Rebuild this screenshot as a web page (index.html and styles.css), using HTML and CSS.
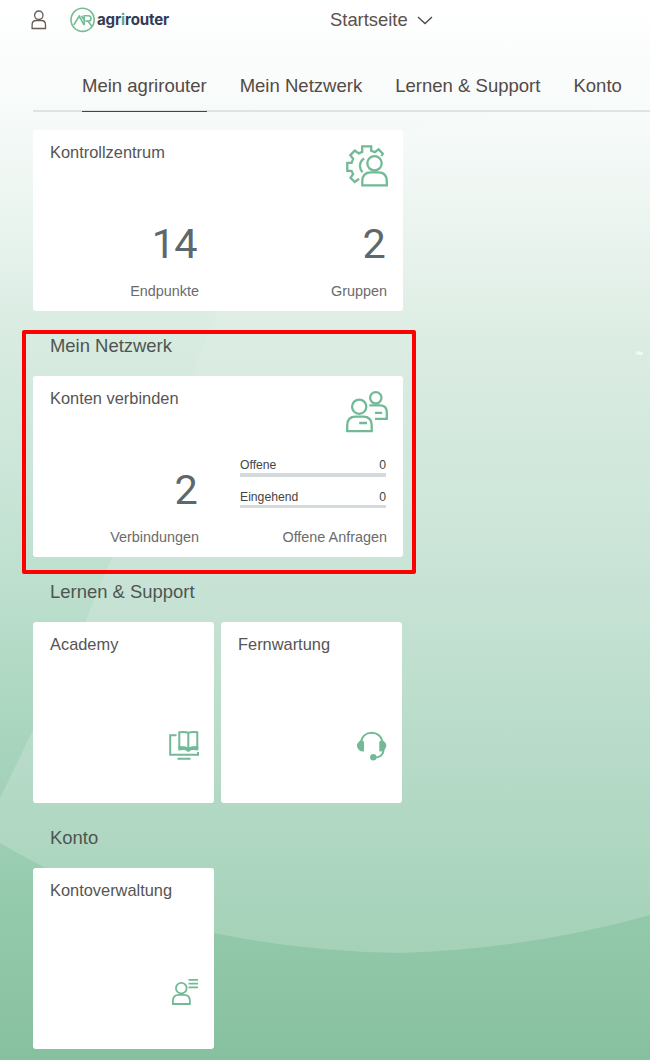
FILE: index.html
```html
<!DOCTYPE html>
<html lang="de">
<head>
<meta charset="utf-8">
<title>agrirouter – Startseite</title>
<link rel="stylesheet" href="styles.css">
</head>
<body>
<div class="page">
  <svg class="backdrop" viewBox="0 0 650 1060" aria-hidden="true">
    <defs>
      <linearGradient id="leaf" x1="0" y1="0" x2="0" y2="1060" gradientUnits="userSpaceOnUse">
        <stop offset="0" stop-color="#ffffff"/>
        <stop offset=".1" stop-color="#f8fcfa"/>
        <stop offset=".2" stop-color="#edf5f1"/>
        <stop offset=".33" stop-color="#dbece2"/>
        <stop offset=".53" stop-color="#cae4d7"/>
        <stop offset=".75" stop-color="#b3d9c5"/>
        <stop offset=".9" stop-color="#a4d1b8"/>
      </linearGradient>
    </defs>
    <path fill="url(#leaf)" d="M0 798L33 730L85 622L112 557L191 376L217 312C260 225 340 138 430 125Q530 110 650 108V915Q530 949 400 953Q300 951 214 933C130 914 70 883 0 843Z"/>
    <path d="M635 353l3-2 5 1v3h-5z" fill="#f6faf8" opacity=".8"/>
  </svg>
  <header class="topbar">
    <svg class="user" viewBox="0 0 16 20"><circle cx="7.8" cy="5.2" r="4.200"/><path d="M1.100 18.500v-3.600Q1.100 10.500 5.200 10.500h5.200q4.100 0 4.100 4.400v3.600z"/></svg>
    <div class="brand">
      <svg class="brand-mark" viewBox="0 0 26 26"><circle cx="12.600" cy="12.800" r="11.600"/><path d="M3.800 18L9.200 9.200l4.900 9M14.200 18V8.700h4.100a2.700 2.700 0 0 1 0 5.400h-2.900M18 14.200l4 5.200M11.300 8.700l3 4.500"/></svg>
      <span class="brand-name">agr<i>i</i>router</span>
    </div>
    <div class="title">Startseite<svg class="chevron" viewBox="0 0 16 9"><path d="M1 1l7 6.500L15 1"/></svg></div>
  </header>
  <nav class="tabs">
    <a class="tab active">Mein agrirouter</a>
    <a class="tab">Mein Netzwerk</a>
    <a class="tab">Lernen &amp; Support</a>
    <a class="tab">Konto</a>
  </nav>
  <main class="content">
    <section class="tile wide">
      <div class="tile-head"><h3>Kontrollzentrum</h3>
        <svg class="icon large" viewBox="0 0 44 44"><path d="M14.300 35.200l-1.500.3-3 2.500-4.300-4.200 2.600-3.600-1.600-3.400H2.300v-8h4.300l1.500-4-2.800-3.700 4.500-4.500 3.900 2.800 3.500-1.500V2.300h9v4.500l3.700 1.400 3.700-2.800 4.200 4.300-1.300 2.300M19.200 14.500Q15 17 15 22q0 3.700 2.500 6.300"/><circle cx="29.500" cy="19.300" r="7.200"/><path d="M17.300 41.300v-4.200q0-8.800 8.700-8.800h7.300q8.500 0 8.500 8.800v4.200z"/></svg>
      </div>
      <div class="metrics">
        <div class="metric"><b>14</b><span>Endpunkte</span></div>
        <div class="metric"><b>2</b><span>Gruppen</span></div>
      </div>
    </section>
    <h2>Mein Netzwerk</h2>
    <section class="tile wide">
      <div class="tile-head"><h3>Konten verbinden</h3>
        <svg class="icon large" viewBox="0 0 44 44"><circle cx="14.200" cy="16.700" r="7.100"/><path d="M2.200 41.200v-5.700Q2.200 26.700 10.700 26.700h7.500Q26.700 26.700 26.700 35.500v5.700zM14.200 33H22"/><circle cx="30.800" cy="7.800" r="5.700"/><path d="M24.300 15.300h10.500q7 0 7 7v6.500H30M30 22.800h7.200"/></svg>
      </div>
      <div class="metrics">
        <div class="metric"><b>2</b><span>Verbindungen</span></div>
        <div class="metric">
          <div class="bars">
            <div class="bar"><span>Offene</span><span>0</span></div>
            <div class="bar thin"><span>Eingehend</span><span>0</span></div>
          </div>
          <span>Offene Anfragen</span>
        </div>
      </div>
    </section>
    <h2>Lernen &amp; Support</h2>
    <div class="row">
      <section class="tile"><h3>Academy</h3>
        <svg class="icon small" viewBox="0 0 32 32"><path d="M8.500 5.300H2.200v19.500H30V22M9.500 28.700h13"/><path d="M11.300 17.500V2.300q5.300-1 9 .5 3.500-1.500 9-.5v15.200q-5.500-.5-9 1.500-3.400-2-9-1.500zM20.300 2.800V19"/><path class="solid" d="M10.300 16.500q6-.8 10 1 4-1.800 10-1v4q-5.500-1-7.500-.2-1 1.500-2.500 1.500t-2.500-1.500q-2.500-.8-7.500.2z"/></svg>
      </section>
      <section class="tile"><h3>Fernwartung</h3>
        <svg class="icon small" viewBox="0 0 32 32"><path d="M4.800 13.500C5.500 6 10.500 2.800 15.700 2.800S26 6 26.500 13.500M27.500 19.500c0 5.500-4.200 8.300-9.500 8"/><path class="solid" d="M3 11.500q2.700-2 5 .3v9.500q-5 1-7-4.800 0-3.500 2-5zM28.300 11.500q-2.700-2-5 .3v9.500q5 1 7-4.800 0-3.500-2-5z"/><circle class="solid" cx="17.300" cy="27.200" r="3.200"/></svg>
      </section>
    </div>
    <h2>Konto</h2>
    <section class="tile"><h3>Kontoverwaltung</h3>
      <svg class="icon small thin-icon" viewBox="0 0 32 32"><circle cx="13.300" cy="12.200" r="5.300"/><path d="M4.900 28v-3q0-6.200 6-6.200h5q6 0 6 6.200v3zM20.500 3.800h9.500M20.500 7.600h9.500M20.500 11.400h9.500"/></svg>
    </section>
  </main>
  <div class="highlight"></div>
</div>
</body>
</html>
```
FILE: styles.css
```css
* { box-sizing: border-box; }
body { margin: 0; font-family: "Liberation Sans", Arial, sans-serif; color: #4d4846; }
.page {
  position: relative; width: 650px; height: 1060px; overflow: hidden;
  background: linear-gradient(#ffffff 0, #f7fbf9 10%, #ebf5f0 20%, #d8ebe1 32%, #cce6d9 44%, #bcdfcd 56%, #add7c1 66%, #a1d0b7 76%, #92c9aa 87%, #87c09f 100%);
}
.backdrop { position: absolute; inset: 0; width: 650px; height: 1060px; }
.topbar, .tabs, .content { position: relative; }
.topbar { display: flex; height: 40px; padding: 7px 0 0 31px; }
.user { width: 16px; height: 20px; margin-top: 3px; fill: none; stroke: #665b55; stroke-width: 1.3; }
.brand { display: flex; width: 260px; margin-left: 23px; }
.brand-mark { width: 26px; height: 26px; fill: none; stroke: #74bd94; stroke-width: 1.6; }
.brand-name { margin-left: 1px; font: 700 15.1px/25px Inter, sans-serif; letter-spacing: -.15px; color: #323a58; }
.brand-name i { font-style: normal; color: #5fa58a; }
.title { font-size: 18.4px; line-height: 26px; display: flex; color: #5c504c; }
.chevron { width: 16px; height: 9px; margin: 9px 0 0 9px; fill: none; stroke: #514743; stroke-width: 1.3; }
.tabs { display: flex; height: 72px; margin-left: 33px; padding-left: 49px; gap: 33px; border-bottom: 2px solid #dfe3e1; }
.tab { height: 72px; padding-top: 35px; font-size: 18.55px; line-height: 22px; white-space: nowrap; color: #544a46; }
.active { border-bottom: 1px solid #4c4340; }
.content { padding: 18px 0 0 33px; }
.tile { position: relative; display: flex; flex-direction: column; justify-content: space-between; width: 181px; height: 181px; padding: 12px 14px 41px 17px; border-radius: 3px; background: #fff; }
.wide { width: 370px; padding: 12px 14px 0 17px; justify-content: flex-start; }
.row { display: flex; gap: 7px; }
h2 { height: 65px; margin: 0; padding-left: 17px; font-weight: 400; font-size: 18.45px; line-height: 70px; color: #4e5551; }
h3 { margin: 0; font-weight: 400; font-size: 16.4px; line-height: 20px; color: #555; }
.tile-head { display: flex; justify-content: space-between; height: 70px; }
.icon { flex: none; fill: none; stroke: #72ba95; }
.large { width: 44px; height: 44px; margin-top: 2px; stroke-width: 2.3; }
.small { width: 32px; height: 32px; align-self: flex-end; stroke-width: 2; }
.thin-icon { stroke-width: 1.8; }
.solid { fill: #72ba95; stroke: none; }
.metrics { display: flex; gap: 41px; }
.metric { display: flex; flex-direction: column; align-items: flex-end; width: 149px; height: 96px; justify-content: space-between; padding-bottom: 7px; }
.metric + .metric { width: 147px; }
.metric b { margin: 8px 2px 0 0; font: 400 41.5px/48px Roboto, sans-serif; letter-spacing: -.7px; color: #5d686d; }
.metric > span { font-size: 14.4px; line-height: 20px; color: #6b6b6b; white-space: nowrap; }
.bars { width: 147px; padding-right: 1px; }
.bar { display: flex; justify-content: space-between; height: 19px; border-bottom: 4px solid #d4dbdc; font-size: 12.2px; line-height: 14px; color: #454545; }
.bar + .bar { height: 18px; margin-top: 13px; }
.bar.thin { height: 18px; border-bottom-width: 3px; }
.highlight { position: absolute; left: 22px; top: 330px; width: 394px; height: 244px; border: 4px solid #f00; border-radius: 2px; }
```
